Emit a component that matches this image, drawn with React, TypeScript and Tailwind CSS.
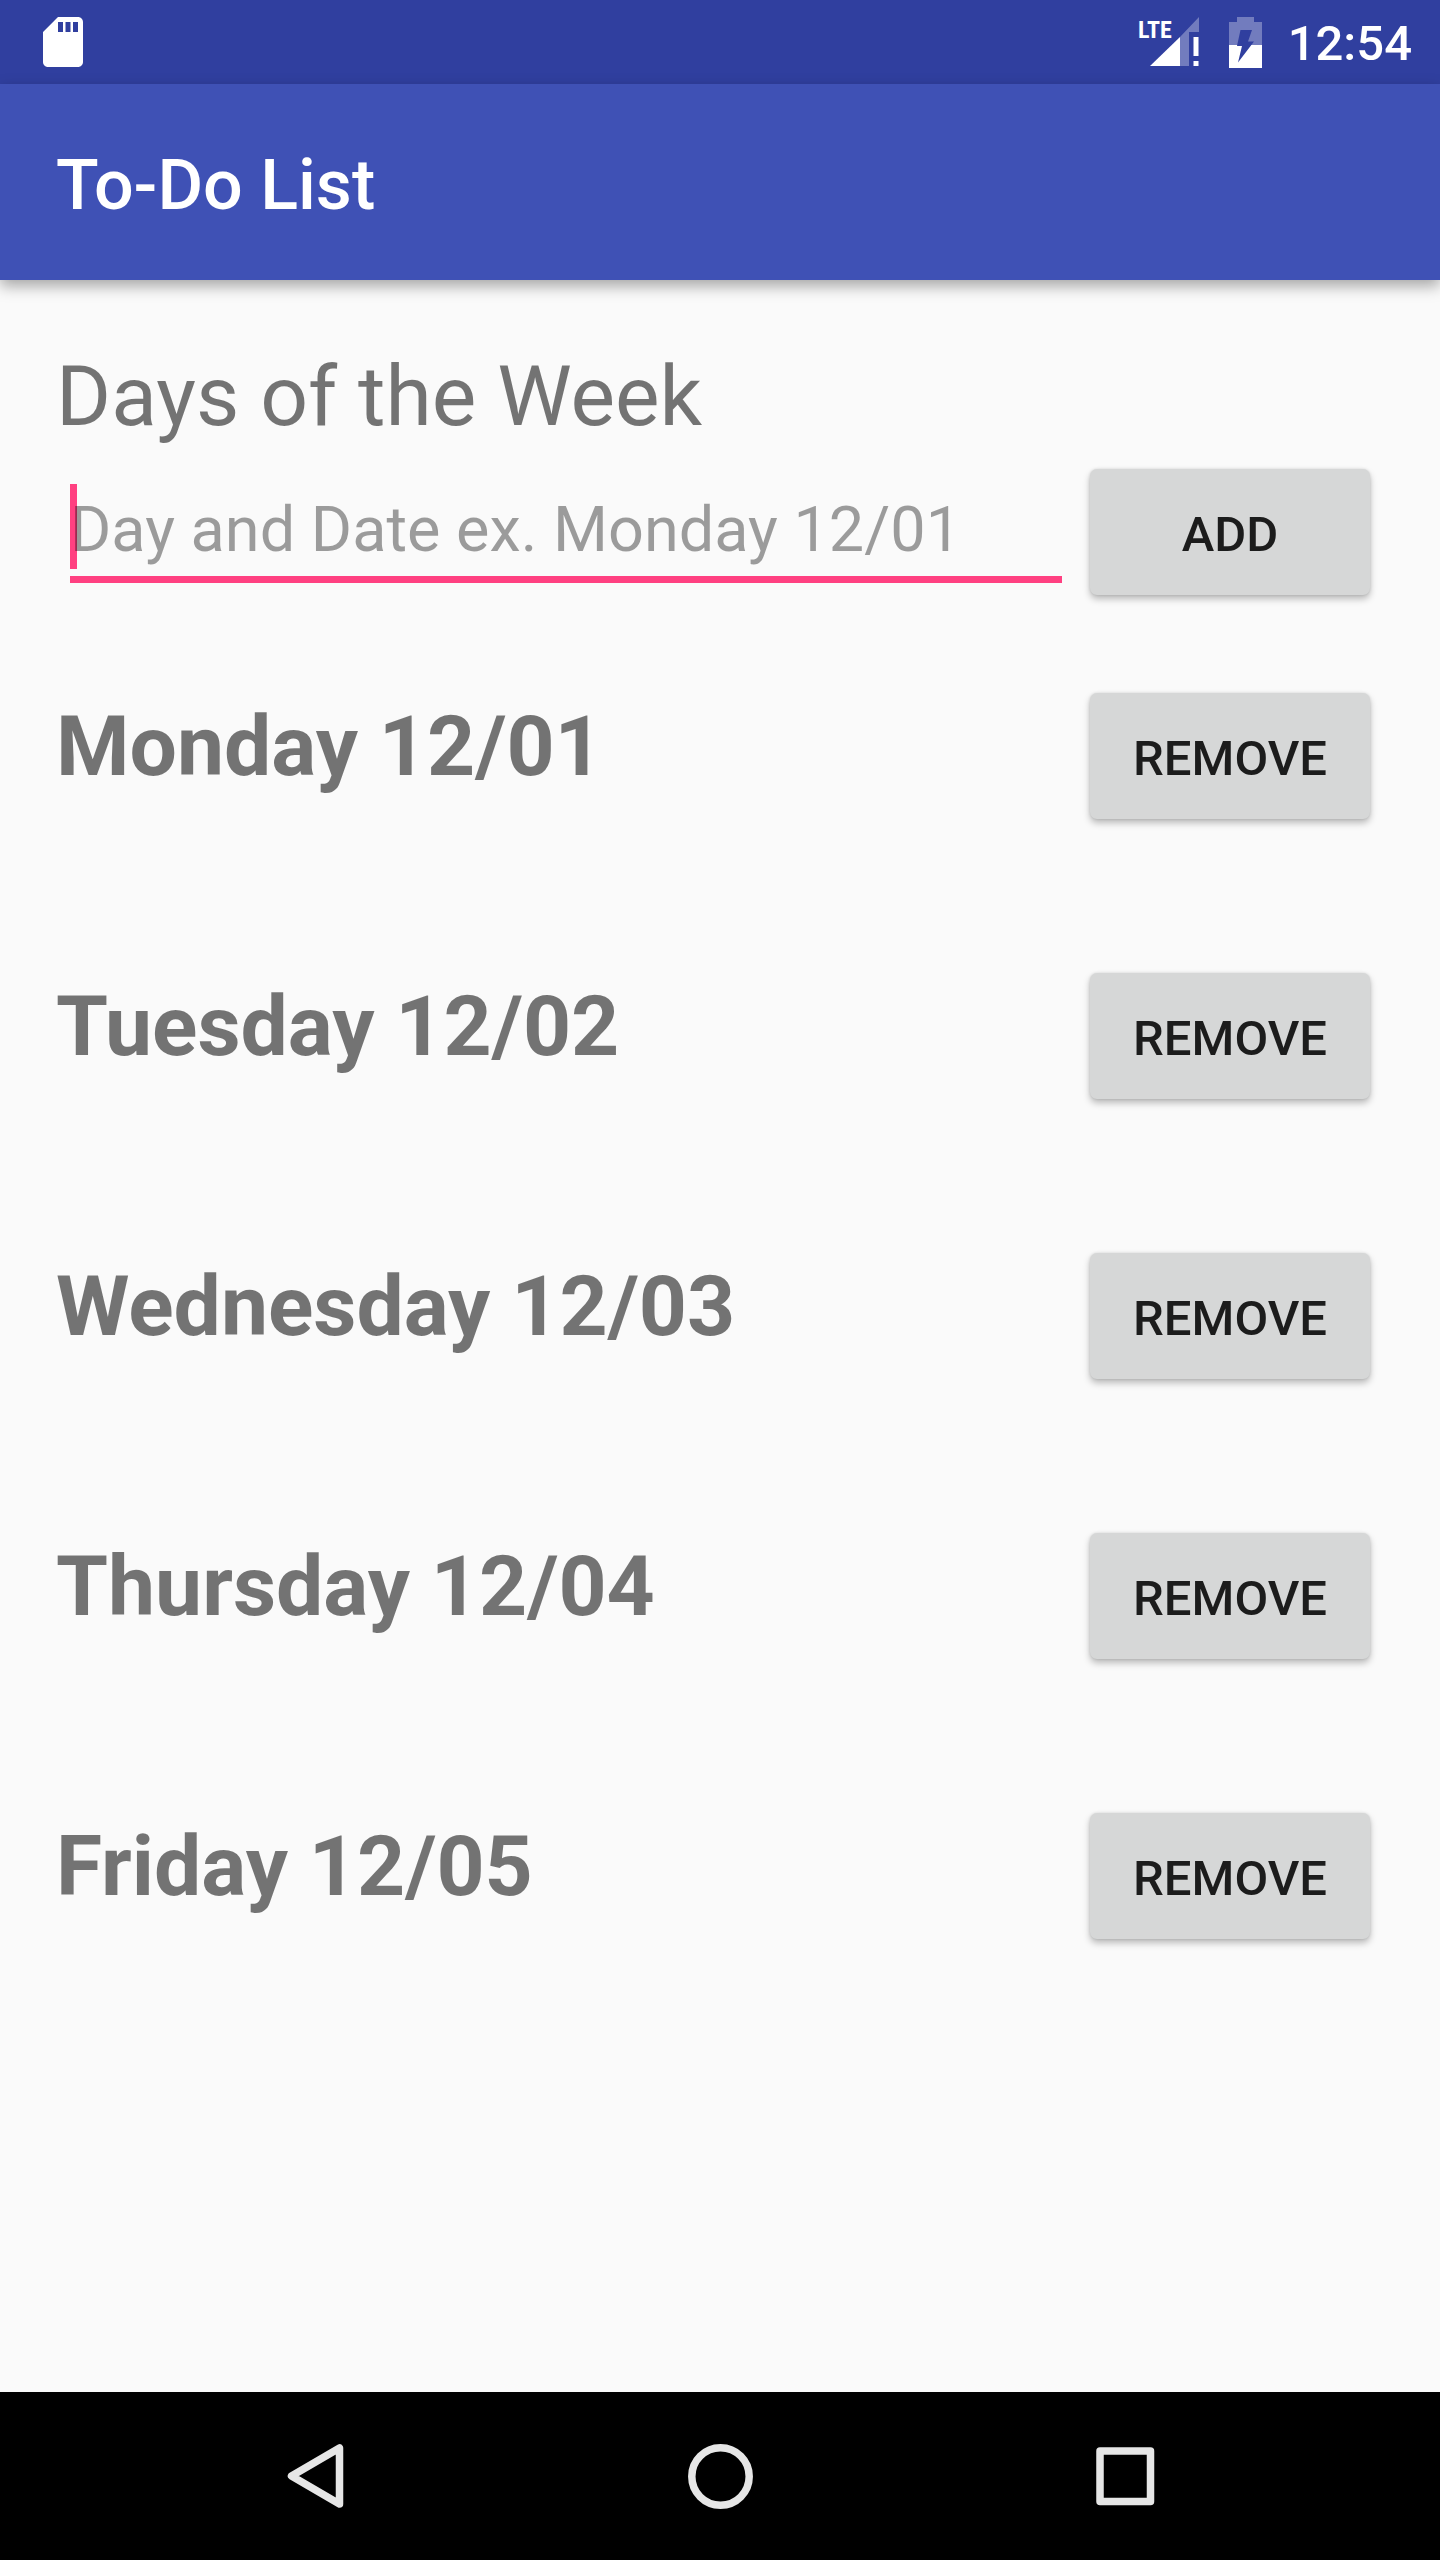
import { useState } from 'react';
import type { FormEvent, ReactNode } from 'react';

const INITIAL_DAYS = [
  'Monday 12/01',
  'Tuesday 12/02',
  'Wednesday 12/03',
  'Thursday 12/04',
  'Friday 12/05',
];

function SdCardIcon() {
  return (
    <svg viewBox="4 2 16 20" className="h-[50px] w-[40px]" fill="#fff" aria-hidden="true">
      <path d="M18 2h-8L4 8v12c0 1.1.9 2 2 2h12c1.1 0 2-.9 2-2V4c0-1.1-.9-2-2-2zM12 8h-2V4h2v4zm3 0h-2V4h2v4zm3 0h-2V4h2v4z" />
    </svg>
  );
}

function SignalIcon() {
  return (
    <svg
      viewBox="0 0 62 50"
      className="h-[50px] w-[62px] overflow-visible"
      fill="#fff"
      role="img"
      aria-label="LTE signal, no internet"
    >
      <text
        x="0"
        y="21"
        fontSize="24"
        fontWeight="700"
        fontFamily='"Roboto Condensed", "Liberation Sans Narrow", Roboto, sans-serif'
      >
        LTE
      </text>
      <path d="M42 20 61 0v15H51v34h-9z" fillOpacity="0.32" />
      <path d="M12 49 42 20v29z" />
      <path d="M55.500 20h5v19h-5zM55.500 44h5v5h-5z" />
    </svg>
  );
}

function BatteryIcon() {
  return (
    <svg viewBox="0 0 33 51" className="h-[51px] w-[33px]" fill="#fff" role="img" aria-label="Battery charging">
      <path d="M8 0h17v5h8v23H0V5h8z" fillOpacity="0.32" />
      <path d="M0 28h33v23H0z" />
      <path d="M11.500 13h11.500l-4 11.500h6L9 45.500l4-16.500H8z" fill="#303f9f" />
    </svg>
  );
}

function ActionButton({
  children,
  type = 'button',
  label,
  onClick,
}: {
  children: ReactNode;
  type?: 'button' | 'submit';
  label?: string;
  onClick?: () => void;
}) {
  return (
    <button
      type={type}
      aria-label={label}
      onClick={onClick}
      className="mx-[14px] my-[21px] h-[126px] w-[280px] shrink-0 rounded-[7px] bg-[#d6d7d7] pt-1.5 text-[49px] leading-[58px] font-medium text-black/87 shadow-[0_4px_7px_rgba(0,0,0,0.26),0_0_3px_rgba(0,0,0,0.12)]"
    >
      {children}
    </button>
  );
}

export default function App() {
  const [days, setDays] = useState(INITIAL_DAYS);
  const [draft, setDraft] = useState('');

  const addDay = (event: FormEvent) => {
    event.preventDefault();
    if (draft.trim()) {
      setDays([...days, draft.trim()]);
      setDraft('');
    }
  };

  return (
    <div className="flex min-h-screen flex-col bg-[#fafafa] font-[Roboto,sans-serif]">
      <div className="flex h-[84px] items-center justify-between bg-[#303f9f] pr-7 pl-[43px]">
        <SdCardIcon />
        <div className="flex items-center">
          <SignalIcon />
          <span className="ml-[29px] flex">
            <BatteryIcon />
          </span>
          <time className="ml-[26px] pt-1 text-[49px] leading-[58px] font-medium text-white">12:54</time>
        </div>
      </div>

      <header className="flex h-[196px] items-center bg-[#3f51b5] px-14 pt-1.5 shadow-[0_6px_14px_rgba(0,0,0,0.34)]">
        <h1 className="text-[70px] leading-[82px] font-medium text-white">To-Do List</h1>
      </header>

      <main className="flex-1 px-14 pt-16 pb-14">
        <h2 className="pt-0.5 text-[84px] leading-[102px] text-black/54">Days of the Week</h2>

        <form onSubmit={addDay} className="flex items-start">
          <div className="relative mx-[14px] mt-9 flex-1">
            {draft === '' && <span className="absolute top-0 left-0 h-[85px] w-[7px] bg-[#ff4081]" />}
            <input
              type="text"
              aria-label="Day and date"
              placeholder="Day and Date ex. Monday 12/01"
              value={draft}
              onChange={(event) => setDraft(event.target.value)}
              className="relative h-[99px] w-full border-b-[7px] border-[#ff4081] bg-transparent pb-0.5 text-[63px] leading-[74px] text-black/87 caret-[#ff4081] outline-none placeholder:text-black/38"
            />
          </div>
          <ActionButton type="submit">ADD</ActionButton>
        </form>

        <ul className="mt-14 flex flex-col gap-28">
          {days.map((day, index) => (
            <li key={`${day}-${index}`} className="flex items-baseline justify-between">
              <span className="text-[84px] leading-[98px] font-bold text-black/54">{day}</span>
              <ActionButton label={`REMOVE ${day}`} onClick={() => setDays(days.filter((_, i) => i !== index))}>
                REMOVE
              </ActionButton>
            </li>
          ))}
        </ul>
      </main>

      <nav aria-label="System" className="grid h-[168px] grid-cols-3 bg-black px-28">
        <button type="button" aria-label="Back" className="flex items-center justify-center">
          <svg viewBox="0 0 66 66" className="size-[66px]" fill="none" stroke="#e6e6e6" strokeWidth="7.500" strokeLinejoin="round">
            <path d="M57.500 5v56L9.500 33z" />
          </svg>
        </button>
        <button type="button" aria-label="Home" className="flex items-center justify-center">
          <svg viewBox="0 0 66 66" className="size-[66px]" fill="none" stroke="#e6e6e6" strokeWidth="7.500">
            <circle cx="33.500" cy="33.500" r="28.700" />
          </svg>
        </button>
        <button type="button" aria-label="Recent apps" className="flex items-center justify-center">
          <svg viewBox="0 0 66 66" className="size-[66px]" fill="none" stroke="#e6e6e6" strokeWidth="7.500" strokeLinejoin="round">
            <path d="M8 8h50.500v50.500H8z" />
          </svg>
        </button>
      </nav>
    </div>
  );
}
